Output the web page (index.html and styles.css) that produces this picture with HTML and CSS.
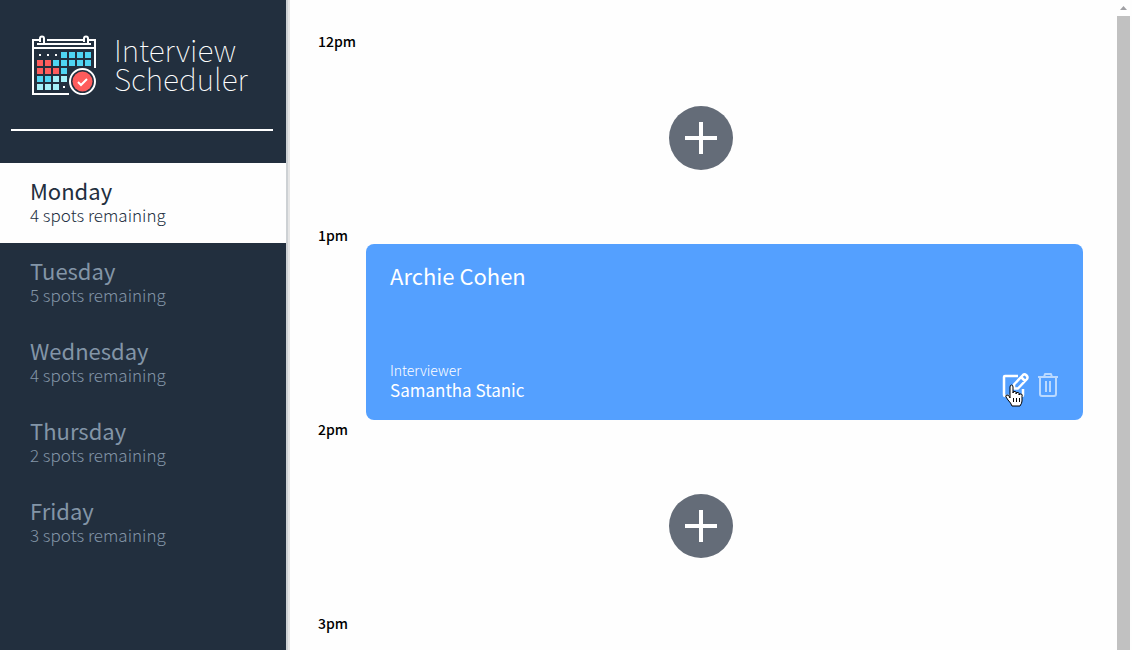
FILE: index.html
```html
<!DOCTYPE html>
<html lang="en">
<head>
<meta charset="utf-8">
<title>Interview Scheduler</title>
<link rel="stylesheet" href="styles.css">
</head>
<body>
<div class="layout">
  <aside class="sidebar">
    <div class="brand">
      <svg class="brand-logo" viewBox="0 0 68 64" width="68" height="64" aria-hidden="true">
        <g fill="none" stroke="#fff" stroke-width="2">
          <path d="M9 7H3V61H39M17 7H53M59 7H65V35M3 15H65M7 11H61"/>
          <path d="M10 9V5.500a2 2 0 0 1 4 0V11M54 9V5.500a2 2 0 0 1 4 0V11"/>
        </g>
        <path fill="#fff" d="M9 21h2v2H9zM17 21h2v2h-2zM25 21h2v2h-2zM33 53h2v2h-2z"/>
        <path fill="#4fd5f3" d="M31 19h6v6h-6zM39 19h6v6h-6zM47 19h6v6h-6zM55 19h6v6h-6zM23 27h6v6h-6zM31 27h6v6h-6zM39 27h6v6h-6zM47 27h6v6h-6zM55 27h6v6h-6zM31 35h6v6h-6zM7 43h6v6H7zM15 43h6v6h-6z"/>
        <path fill="#ff5c5c" d="M7 27h6v6H7zM15 27h6v6h-6zM7 35h6v6H7zM15 35h6v6h-6zM23 35h6v6h-6z"/>
        <path fill="#a4f0f8" d="M23 43h6v6h-6zM31 43h6v6h-6zM7 51h6v6H7zM15 51h6v6h-6zM23 51h6v6h-6z"/>
        <circle cx="52.500" cy="48.500" r="14" fill="#222f3e"/>
        <circle cx="52.500" cy="48.500" r="12.500" fill="#222f3e" stroke="#fff" stroke-width="2"/>
        <circle cx="52.500" cy="48.500" r="10" fill="#ff5c5c"/>
        <path d="M48 49l3 3 6-6" fill="none" stroke="#fff" stroke-width="2"/>
      </svg>
      <h1 class="brand-name">Interview<br>Scheduler</h1>
    </div>
    <hr class="separator">
    <nav class="days">
      <button class="day day-selected" type="button"><span class="day-name">Monday</span><span class="day-spots">4 spots remaining</span></button>
      <button class="day" type="button"><span class="day-name">Tuesday</span><span class="day-spots">5 spots remaining</span></button>
      <button class="day" type="button"><span class="day-name">Wednesday</span><span class="day-spots">4 spots remaining</span></button>
      <button class="day" type="button"><span class="day-name">Thursday</span><span class="day-spots">2 spots remaining</span></button>
      <button class="day" type="button"><span class="day-name">Friday</span><span class="day-spots">3 spots remaining</span></button>
    </nav>
  </aside>
  <main class="schedule">
    <section class="slot">
      <h2 class="slot-time">12pm</h2>
      <div class="slot-empty">
        <button class="add" type="button" aria-label="Add"><svg viewBox="0 0 64 64" width="64" height="64"><path d="M32 16V48M16 32H48" stroke="#fff" stroke-width="4"/></svg></button>
      </div>
    </section>
    <section class="slot">
      <h2 class="slot-time">1pm</h2>
      <article class="card">
        <h3 class="card-student">Archie Cohen</h3>
        <div class="card-footer">
          <div>
            <h4 class="card-label">Interviewer</h4>
            <p class="card-interviewer">Samantha Stanic</p>
          </div>
          <div class="card-actions">
            <button class="action action-hover" type="button" aria-label="Edit">
              <svg viewBox="-1 0 28 26" width="28" height="26" fill="none" stroke="#fff" stroke-width="2.500" stroke-linejoin="round"><path d="M16 4H3Q2 4 2 5V23Q2 24 3 24H20Q21 24 21 23V17"/><path d="M12 12.500L21 3Q22.500 1.500 24 3L25 4Q26 5.500 25 7L16 16.500H12ZM19 5L23 9"/></svg>
              <svg class="pointer" viewBox="0 0 20 24" width="20" height="24"><path d="M6 14V3Q6 1 7.500 1T9 3V9Q9 7 11 7.500T12 10Q12 8 14 8.500T15 11Q15 9.500 17 10T18 12V17Q18 19 16 22H8Q7 19 4 16L2 13Q1 11.500 3 11T6 14Z" fill="#fff" stroke="#000" stroke-linejoin="round"/><path d="M9.500 14v4M12.500 14v4M15.500 14v4" stroke="#000"/></svg>
            </button>
            <button class="action" type="button" aria-label="Delete">
              <svg viewBox="0 0 22 26" width="22" height="26" fill="none" stroke="#fff" stroke-width="2" stroke-linejoin="round"><path d="M1 5H21M7 5L8 2H14L15 5M3 5V22Q3 24 5 24H17Q19 24 19 22V5M9 9V20M13 9V20"/></svg>
            </button>
          </div>
        </div>
      </article>
    </section>
    <section class="slot">
      <h2 class="slot-time">2pm</h2>
      <div class="slot-empty">
        <button class="add" type="button" aria-label="Add"><svg viewBox="0 0 64 64" width="64" height="64"><path d="M32 16V48M16 32H48" stroke="#fff" stroke-width="4"/></svg></button>
      </div>
    </section>
    <section class="slot">
      <h2 class="slot-time">3pm</h2>
    </section>
  </main>
  <div class="scrollbar" aria-hidden="true">
    <svg viewBox="0 0 13 16" width="13" height="16"><path d="M3 10h7L6.500 6z" fill="#a0a0a4"/></svg>
    <div class="scrollbar-thumb"></div>
  </div>
</div>
</body>
</html>
```

FILE: styles.css
```css
* { box-sizing: border-box; }
body {
  margin: 0;
  background: #fefefe;
  color: #000;
  font-family: "Noto Sans CJK SC", "Noto Sans", sans-serif;
}
h1, h2, h3, h4, p { margin: 0; font-weight: 400; }
button { font: inherit; color: inherit; border: 0; padding: 0; background: none; cursor: pointer; }
svg { display: block; }
.layout { display: flex; height: 100vh; overflow: hidden; padding-right: 2px; }

.sidebar {
  flex: none;
  width: 286px;
  background: #222f3e;
  color: #8395a7;
  box-shadow: 2px 0 0 #cdd1d4, 4px 0 0 #e6e6e6;
}
.brand { display: flex; gap: 16px; padding: 33px 0 0 30px; color: #fff; }
.brand-name { font-size: 30px; line-height: 29px; font-weight: 100; padding-top: 2px; }
.separator { margin: 32px 13px 32px 11px; border: 0; height: 2px; background: #fff; }
.day { display: block; width: 100%; height: 80px; padding: 0 30px; text-align: left; }
.day-selected { background: #fefefe; color: #222f3e; }
.day-name, .day-spots { display: block; }
.day-name { font-size: 22px; line-height: 24px; }
.day-spots { font-size: 17px; line-height: 26px; font-weight: 300; }

.schedule { flex: 1; min-width: 0; padding: 32px 34px 0 32px; }
.slot-time { font-size: 14px; line-height: 18px; font-weight: 500; }
.slot-empty { display: flex; align-items: center; justify-content: center; height: 176px; }
.add { width: 64px; height: 64px; border-radius: 50%; background: #646c78; }
.card {
  display: flex;
  flex-direction: column;
  justify-content: space-between;
  height: 176px;
  margin-left: 48px;
  padding: 16px 24px 20px;
  border-radius: 8px;
  background: #54a0ff;
  color: #fff;
}
.card-student { font-size: 22px; line-height: 30px; }
.card-footer { display: flex; justify-content: space-between; align-items: flex-end; }
.card-label { font-size: 14px; line-height: 20px; font-weight: 300; }
.card-interviewer { font-size: 17px; line-height: 20px; }
.card-actions { display: flex; gap: 8px; padding-bottom: 2px; }
.action { position: relative; opacity: 0.6; }
.action-hover { opacity: 1; }
.pointer { position: absolute; left: 3px; top: 12px; }

.scrollbar { flex: none; width: 13px; display: flex; flex-direction: column; }
.scrollbar-thumb { flex: 1; background: #c1c1c1; }
```
